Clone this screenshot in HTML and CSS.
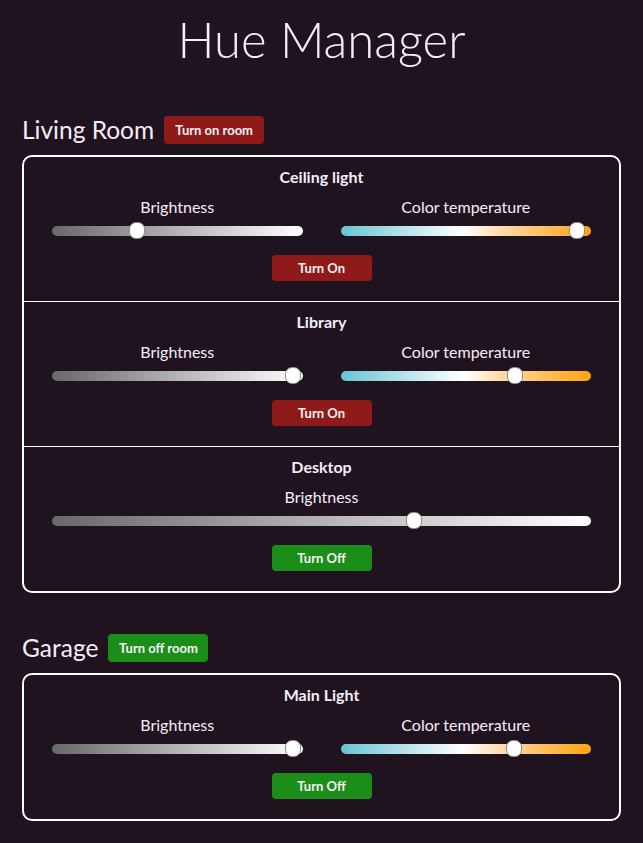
FILE: index.html
```html
<!DOCTYPE html>
<html lang="en">
<head>
<meta charset="utf-8">
<title>Hue Manager</title>
<link rel="stylesheet" href="styles.css">
</head>
<body>
<main class="app">
  <h1 class="title">Hue Manager</h1>

  <section class="room">
    <div class="room-header">
      <h2 class="room-name">Living Room</h2>
      <button class="btn btn-room btn-on">Turn on room</button>
    </div>
    <div class="card">
      <div class="light">
        <div class="light-name">Ceiling light</div>
        <div class="controls">
          <div class="control">
            <div class="label">Brightness</div>
            <div class="slider"><div class="track track-bri"></div><div class="thumb" style="left:34%"></div></div>
          </div>
          <div class="control">
            <div class="label">Color temperature</div>
            <div class="slider"><div class="track track-temp"></div><div class="thumb" style="left:94.6%"></div></div>
          </div>
        </div>
        <button class="btn btn-light btn-on">Turn On</button>
      </div>
      <div class="light">
        <div class="light-name">Library</div>
        <div class="controls">
          <div class="control">
            <div class="label">Brightness</div>
            <div class="slider"><div class="track track-bri"></div><div class="thumb" style="left:96.4%"></div></div>
          </div>
          <div class="control">
            <div class="label">Color temperature</div>
            <div class="slider"><div class="track track-temp"></div><div class="thumb" style="left:69.6%"></div></div>
          </div>
        </div>
        <button class="btn btn-light btn-on">Turn On</button>
      </div>
      <div class="light">
        <div class="light-name">Desktop</div>
        <div class="controls single">
          <div class="control">
            <div class="label">Brightness</div>
            <div class="slider"><div class="track track-bri"></div><div class="thumb" style="left:67.1%"></div></div>
          </div>
        </div>
        <button class="btn btn-light btn-off">Turn Off</button>
      </div>
    </div>
  </section>

  <section class="room">
    <div class="room-header">
      <h2 class="room-name">Garage</h2>
      <button class="btn btn-room btn-off">Turn off room</button>
    </div>
    <div class="card">
      <div class="light">
        <div class="light-name">Main Light</div>
        <div class="controls">
          <div class="control">
            <div class="label">Brightness</div>
            <div class="slider"><div class="track track-bri"></div><div class="thumb" style="left:96.4%"></div></div>
          </div>
          <div class="control">
            <div class="label">Color temperature</div>
            <div class="slider"><div class="track track-temp"></div><div class="thumb" style="left:69.4%"></div></div>
          </div>
        </div>
        <button class="btn btn-light btn-off">Turn Off</button>
      </div>
    </div>
  </section>
</main>
</body>
</html>
```

FILE: styles.css
```css
* { box-sizing: border-box; }

html, body {
  margin: 0;
  padding: 0;
  background: #201320;
  color: #f3eef6;
  font-family: Lato, "Liberation Sans", sans-serif;
}

.app {
  padding: 0 22px 24px 22px;
}

.title {
  margin: 11px 0 0 0;
  font-size: 49px;
  line-height: 56px;
  font-weight: 300;
  text-align: center;
}

.room {
  margin-top: 49px;
}

.room + .room {
  margin-top: 41px;
}

.room-header {
  display: flex;
  align-items: center;
  gap: 10px;
  height: 28px;
  margin-bottom: 11px;
}

.room-name {
  margin: 0;
  font-size: 24.5px;
  line-height: 28px;
  font-weight: 400;
}

.btn {
  border: none;
  color: #f6f0f6;
  font-family: Lato, "Liberation Sans", sans-serif;
  font-weight: 700;
  font-size: 13px;
  width: 100px;
  border-radius: 4px;
  padding: 0;
  cursor: pointer;
}

.btn-room { height: 28px; }
.btn-light { height: 26px; margin-top: 16px; }

.btn-on { background: #8f1a1a; }
.btn-off { background: #1b8e19; }

.card {
  border: 2px solid #ffffff;
  border-radius: 10px;
}

.light {
  display: flex;
  flex-direction: column;
  align-items: center;
  padding: 10px 28px 20px 28px;
}

.light + .light {
  border-top: 1px solid #ffffff;
}

.light-name {
  font-weight: 700;
  font-size: 16px;
  line-height: 20px;
  margin-bottom: 10px;
}

.controls {
  display: grid;
  grid-template-columns: 1fr 1fr;
  column-gap: 38px;
  width: 100%;
}

.controls.single {
  grid-template-columns: 1fr;
}

.control {
  display: flex;
  flex-direction: column;
  align-items: stretch;
}

.label {
  text-align: center;
  font-size: 16px;
  line-height: 20px;
  margin-bottom: 5px;
}

.slider {
  position: relative;
  height: 17px;
  display: flex;
  align-items: center;
}

.track {
  width: 100%;
  height: 10px;
  border-radius: 5px;
}

.track-bri {
  background: linear-gradient(to right, #686868, #ffffff);
}

.track-temp {
  background: linear-gradient(to right, #68c5d4 0%, #ffffff 49%, #ffd9a6 65%, #ffa20c 100%);
}

.thumb {
  position: absolute;
  top: 0;
  width: 16px;
  height: 17px;
  margin-left: -8px;
  background: #ffffff;
  border: 1px solid #8c8c8c;
  border-radius: 7px;
}
```
